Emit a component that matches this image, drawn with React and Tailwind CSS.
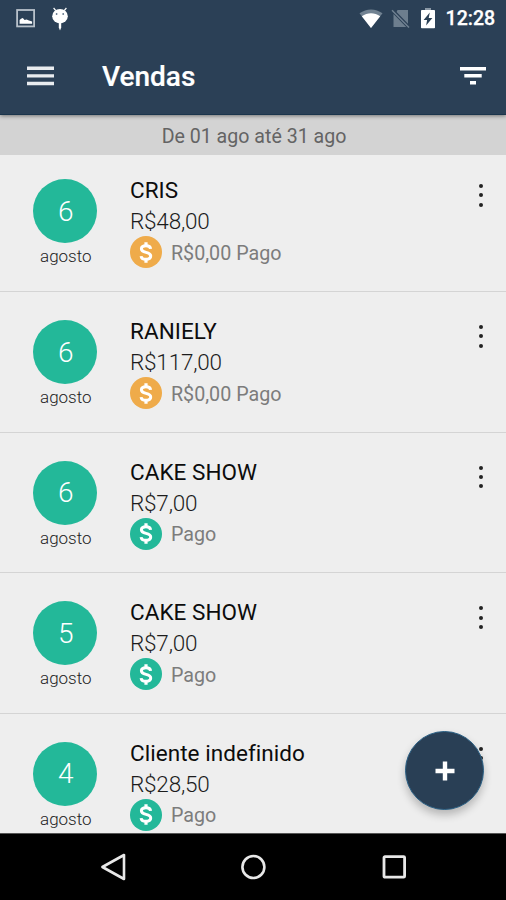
import clsx from 'clsx';

const sales = [
  { day: '6', month: 'agosto', name: 'CRIS', amount: 'R$48,00', status: 'R$0,00 Pago', paid: false },
  { day: '6', month: 'agosto', name: 'RANIELY', amount: 'R$117,00', status: 'R$0,00 Pago', paid: false },
  { day: '6', month: 'agosto', name: 'CAKE SHOW', amount: 'R$7,00', status: 'Pago', paid: true },
  { day: '5', month: 'agosto', name: 'CAKE SHOW', amount: 'R$7,00', status: 'Pago', paid: true },
  { day: '4', month: 'agosto', name: 'Cliente indefinido', amount: 'R$28,50', status: 'Pago', paid: true },
];

function StatusBar() {
  return (
    <div className="flex h-[37px] items-center pl-4 pr-[10px]">
      {/* Screenshot notification */}
      <svg className="h-[19px] w-[19px]" viewBox="0 0 19 19" fill="none">
        <rect x="1.1" y="1" width="17" height="16.4" stroke="#b8c1ca" strokeWidth="1.8" />
        <path d="M3.6 14.7v-3.6l1.4-1.4 1.8-.6 1.8 1.9 2-.4 2.4.8 3.1 1.2v2.1z" fill="#fff" />
      </svg>
      <svg className="ml-4 h-[24px] w-[18px]" viewBox="0 0 18 24" fill="#fff">
        <path d="M2.6 1l2.2 2.6M15.4 1l-2.2 2.6" stroke="#fff" strokeWidth="1.2" />
        <ellipse cx="9" cy="9.2" rx="7.8" ry="7.2" />
        <path d="M7.8 16h2.4v4.4L9 23.6l-1.2-3.2z" />
        <circle cx="5.6" cy="7" r="0.9" fill="#62758a" />
        <circle cx="12.2" cy="7" r="0.9" fill="#62758a" />
      </svg>

      <div className="ml-auto flex items-center">
        <svg className="h-[20px] w-[24px]" viewBox="0 0 24 20">
          <path d="M0.5 4.3C7.5-.8 16.5-.8 23.5 4.3L12 19z" fill="#718292" />
          <path d="M2.8 7.2C8.5 3.2 15.5 3.2 21.2 7.2L12 19z" fill="#fff" />
        </svg>
        <svg className="ml-[8px] h-[20px] w-[19px]" viewBox="0 0 19 20">
          <path d="M6.5 1H17v13.8L5.6 3zM2.5 5L15.2 18H2.5z" fill="#6d7e8e" />
          <path d="M1 1.2L18 18.6" stroke="#718292" strokeWidth="1.4" />
        </svg>
        <svg className="ml-[10px] h-[21px] w-[16px]" viewBox="0 0 16 21">
          <path d="M5 0h6v3H5z" fill="#8b99a6" />
          <rect x="1" y="2" width="14" height="18.2" rx="0.8" fill="#fff" />
          <path d="M9.8 4.4L3.6 12h3.5l-1 5.6L12.4 10H8.7z" fill="#293f54" />
        </svg>
        <span className="ml-[10px] w-[50.5px] whitespace-nowrap pt-px text-[19.6px] leading-5 font-medium [-webkit-text-stroke:0.25px_white]">12:28</span>
      </div>
    </div>
  );
}

function AppBar() {
  return (
    <div className="flex h-[78px] items-center pl-[26.5px] pr-5">
      <svg className="h-[20px] w-[27px]" viewBox="0 0 27 20" stroke="#e9ecef" strokeWidth="3.4">
        <path d="M0 2.3h27M0 9.9h27M0 17.5h27" />
      </svg>
      <h1 className="ml-[48.5px] pt-px text-[28px] leading-8 font-medium [-webkit-text-stroke:0.2px_white]">Vendas</h1>
      <svg className="ml-auto h-[20px] w-[26px]" viewBox="0 0 26 20" stroke="#fff" strokeWidth="3.4">
        <path d="M0 2.8h26M4.3 9.8h17.4M10 16.8h6" />
      </svg>
    </div>
  );
}

function MoneyIcon({ paid }) {
  return (
    <div className={clsx('flex h-8 w-8 items-center justify-center rounded-full', paid ? 'bg-[#23b899]' : 'bg-[#efab4a]')}>
      <svg className="h-[21px] w-[14px]" viewBox="0 0 14 21" fill="none" stroke="#fff">
        <path d="M11.6 6.8C11.4 4.6 9.6 3.7 7 3.7S2.4 4.8 2.4 6.8C2.4 9 4.4 9.8 7 10.4s4.7 1.4 4.7 3.6-2 3.3-4.7 3.3-4.7-1-4.9-3.2" strokeWidth="3" />
        <path d="M7 .3v3.6M7 17v3.7" strokeWidth="3.2" />
      </svg>
    </div>
  );
}

function SaleRow({ sale, first }) {
  return (
    <div className={clsx('flex shrink-0 items-start border-b border-[#d4d4d4] pl-[33.3px] pr-[23.2px]', first ? 'h-[137px] pt-6' : 'h-[140.6px] pt-[28px]')}>
      <div className="flex w-16 flex-col items-center">
        <div className="flex h-16 w-16 items-center justify-center rounded-full bg-[#23b899] pl-px pt-px text-[28px] font-light text-white">
          {sale.day}
        </div>
        <span className="mt-[3px] pl-px text-[17px] leading-5 font-light text-[#222]">{sale.month}</span>
      </div>

      <div className="ml-[32.7px] flex-1 whitespace-nowrap">
        <div className="-mt-[4px] text-[22.5px] leading-[31px] tracking-[0.05px] text-[#0c0c0c]">{sale.name}</div>
        <div className="text-[22.5px] leading-[30px] font-light tracking-[-0.2px] text-[#1c1c1c]">{sale.amount}</div>
        <div className="flex items-center gap-[9px]">
          <MoneyIcon paid={sale.paid} />
          <span className="pt-[3px] text-[19.7px] leading-7 text-[#7c7c7c]">{sale.status}</span>
        </div>
      </div>

      <div className="mt-[5px] flex flex-col gap-[5.4px]">
        <span className="h-1 w-1 rounded-full bg-[#222]" />
        <span className="h-1 w-1 rounded-full bg-[#222]" />
        <span className="h-1 w-1 rounded-full bg-[#222]" />
      </div>
    </div>
  );
}

function NavBar() {
  return (
    <nav className="flex h-[67px] items-center justify-center gap-[114.5px] border-t border-[#555] bg-black">
      <svg className="h-7 w-[26px]" viewBox="0 0 26 28" fill="none" stroke="#e8e8e8" strokeWidth="2.6" strokeLinejoin="round">
        <path d="M24 2v24L2.4 14z" />
      </svg>
      <svg className="h-[26px] w-[26px]" viewBox="0 0 26 26" fill="none" stroke="#e8e8e8" strokeWidth="2.6">
        <circle cx="13.4" cy="13" r="11" />
      </svg>
      <svg className="h-[26px] w-[26px]" viewBox="0 0 26 26" fill="none" stroke="#e8e8e8" strokeWidth="2.8">
        <rect x="3" y="2.6" width="20.6" height="20.6" rx="1" />
      </svg>
    </nav>
  );
}

export default function App() {
  return (
    <div className="flex h-[900px] w-[506px] flex-col overflow-hidden bg-[#eeeeee] font-[Roboto,sans-serif]">
      <header className="relative z-10 h-[115px] border-b border-[#1b354c] bg-[#2b4056] text-white shadow-[0_1px_4px_rgba(0,0,0,0.45)]">
        <StatusBar />
        <AppBar />
      </header>

      <div className="flex h-10 items-center justify-center bg-[#d3d3d3] pl-[2px] pt-[3px] text-[19.6px] text-[#646464]">
        De 01 ago até 31 ago
      </div>

      <main className="relative flex h-[678px] flex-col overflow-hidden">
        {sales.map((sale, i) => (
          <SaleRow key={i} sale={sale} first={i === 0} />
        ))}

        {/* Add button floats over the list */}
        <button className="absolute right-[21.6px] bottom-[22.6px] flex h-[79px] w-[79px] items-center justify-center rounded-full border border-[#2a6085] bg-[#293f55] shadow-[0_5px_8px_rgba(0,0,0,0.24)]">
          <svg className="h-5 w-5" viewBox="0 0 20 20" stroke="#fff" strokeWidth="4.4">
            <path d="M10 .5v19M.5 10h19" />
          </svg>
        </button>
      </main>

      <NavBar />
    </div>
  );
}
